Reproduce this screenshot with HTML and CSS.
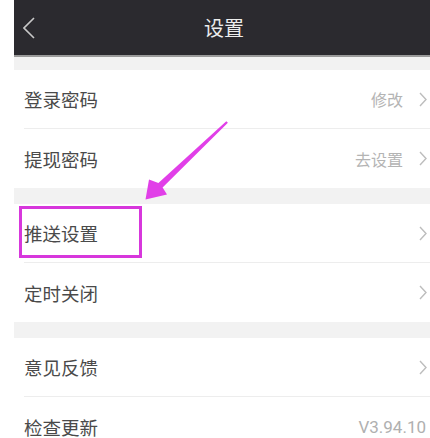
FILE: index.html
```html
<!DOCTYPE html>
<html lang="zh">
<head>
<meta charset="utf-8">
<link rel="stylesheet" href="styles.css">
</head>
<body>
<div class="page">
  <div class="screen">
    <header class="topbar">
      <svg class="back" width="12" height="22" viewBox="0 0 12 22"><polyline points="11,1 1,11 11,21" fill="none" stroke="#c8c8c8" stroke-width="1.6"/></svg>
      <div class="title">设置</div>
    </header>
    <div class="band band-first"></div>
    <div class="group">
      <div class="row"><span class="label">登录密码</span><span class="value">修改</span><svg class="chev" width="8" height="15" viewBox="0 0 8 15"><polyline points="1,1 7,7.5 1,14" fill="none" stroke="#bdbdbd" stroke-width="1.4"/></svg></div>
      <div class="row"><span class="label">提现密码</span><span class="value">去设置</span><svg class="chev" width="8" height="15" viewBox="0 0 8 15"><polyline points="1,1 7,7.5 1,14" fill="none" stroke="#bdbdbd" stroke-width="1.4"/></svg></div>
    </div>
    <div class="band"></div>
    <div class="group">
      <div class="row"><span class="label">推送设置</span><span class="value"></span><svg class="chev" width="8" height="15" viewBox="0 0 8 15"><polyline points="1,1 7,7.5 1,14" fill="none" stroke="#bdbdbd" stroke-width="1.4"/></svg></div>
      <div class="row"><span class="label">定时关闭</span><span class="value"></span><svg class="chev" width="8" height="15" viewBox="0 0 8 15"><polyline points="1,1 7,7.5 1,14" fill="none" stroke="#bdbdbd" stroke-width="1.4"/></svg></div>
    </div>
    <div class="band"></div>
    <div class="group">
      <div class="row"><span class="label">意见反馈</span><span class="value"></span><svg class="chev" width="8" height="15" viewBox="0 0 8 15"><polyline points="1,1 7,7.5 1,14" fill="none" stroke="#bdbdbd" stroke-width="1.4"/></svg></div>
      <div class="row"><span class="label">检查更新</span><span class="value version">V3.94.10</span></div>
    </div>
  </div>
  <div class="highlight"></div>
  <svg class="arrow" width="430" height="438" viewBox="0 0 430 438">
    <polygon points="226.3,121.3 227.9,122.8 162.6,187.5 167,194.5 145.5,199.5 149,179.5 158.4,183.1" fill="#e13fe8"/>
  </svg>
</div>
</body>
</html>
```

FILE: styles.css
```css
html, body {
  margin: 0;
  padding: 0;
  background: #ffffff;
}
body {
  font-family: "Noto Sans CJK SC", "Noto Sans", sans-serif;
  width: 430px;
  height: 438px;
  overflow: hidden;
}
.page {
  position: relative;
  width: 430px;
  height: 438px;
}
.screen {
  margin-left: 14px;
  width: 416px;
  display: flex;
  flex-direction: column;
}
.topbar {
  height: 55px;
  background: #2b2a2f;
  border-bottom: 2px solid #9a9a9a;
  display: flex;
  align-items: center;
  position: relative;
}
.back {
  margin-left: 9px;
}
.title {
  position: absolute;
  left: 0;
  right: 0;
  text-align: center;
  color: #ececec;
  font-size: 20px;
  line-height: 55px;
  padding-left: 4px;
}
.band {
  height: 16px;
  background: #f2f2f2;
}
.band-first {
  height: 13px;
}
.group {
  display: flex;
  flex-direction: column;
}
.row {
  height: 58px;
  margin-left: 10px;
  display: flex;
  align-items: center;
  border-bottom: 1px solid #ededed;
}
.row:last-child {
  border-bottom: none;
  height: 59px;
}
.label {
  font-size: 18.5px;
  color: #4a4a4a;
  flex: 1;
}
.value {
  font-size: 16px;
  color: #b4b4b4;
  margin-right: 16px;
}
.version {
  margin-right: 4px;
  font-family: "Roboto", "Noto Sans", sans-serif;
  font-size: 17px;
  color: #b0b0b0;
}
.chev {
  margin-right: 3px;
}
.highlight {
  position: absolute;
  left: 19px;
  top: 206px;
  width: 117px;
  height: 46px;
  border: 3px solid #d737dc;
}
.arrow {
  position: absolute;
  left: 0;
  top: 0;
  pointer-events: none;
}
```
